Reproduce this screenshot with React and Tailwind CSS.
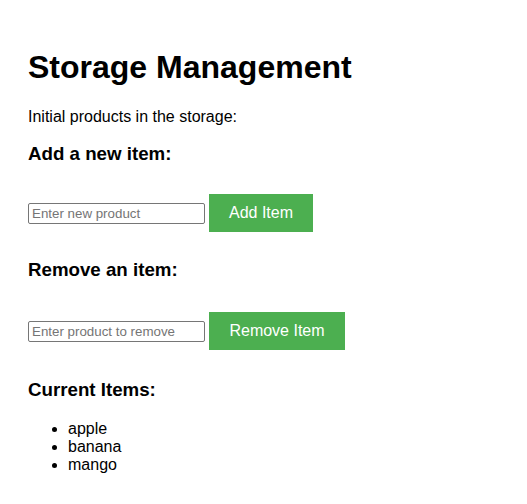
import { useState } from "react";

export default function App() {
  const [items, setItems] = useState(["apple", "banana", "mango"]);
  const [newItem, setNewItem] = useState("");
  const [removeItem, setRemoveItem] = useState("");

  const addItem = () => {
    if (!newItem.trim()) return;
    setItems([...items, newItem.trim()]);
    setNewItem("");
  };

  const deleteItem = () => {
    setItems(items.filter((i) => i !== removeItem.trim()));
    setRemoveItem("");
  };

  return (
    <div className="pt-[28px] pl-[28px] font-['Liberation_Sans',Arial,sans-serif] text-black bg-white min-h-screen">
      <h1 className="mt-[21px] text-[32px] leading-[37px] font-bold">
        Storage Management
      </h1>
      <p className="mt-[21.5px] text-[16px] leading-[18px]">
        Initial products in the storage:
      </p>

      <h3 className="mt-[17.5px] text-[18.72px] leading-[21.5px] font-bold">
        Add a new item:
      </h3>
      <div className="mt-[29.5px] flex items-center">
        <input
          type="text"
          placeholder="Enter new product"
          value={newItem}
          onChange={(e) => setNewItem(e.target.value)}
          className="w-[177px] h-[21px] border border-[#767676] rounded-[2px] px-[3px] text-[13.33px] placeholder:text-[#757575] outline-none"
        />
        <button
          onClick={addItem}
          className="ml-[4px] h-[38px] w-[104px] bg-[#4caf50] text-white text-[16px] leading-[18px]"
        >
          Add Item
        </button>
      </div>

      <h3 className="mt-[27px] text-[18.72px] leading-[21.5px] font-bold">
        Remove an item:
      </h3>
      <div className="mt-[31.5px] flex items-center">
        <input
          type="text"
          placeholder="Enter product to remove"
          value={removeItem}
          onChange={(e) => setRemoveItem(e.target.value)}
          className="w-[177px] h-[21px] border border-[#767676] rounded-[2px] px-[3px] text-[13.33px] placeholder:text-[#757575] outline-none"
        />
        <button
          onClick={deleteItem}
          className="ml-[4px] h-[38px] w-[136px] bg-[#4caf50] text-white text-[16px] leading-[18px]"
        >
          Remove Item
        </button>
      </div>

      <h3 className="mt-[29px] text-[18.72px] leading-[21.5px] font-bold">
        Current Items:
      </h3>
      <ul className="mt-[19px] pl-[40px] list-disc text-[16px] leading-[18px]">
        {items.map((item) => (
          <li key={item}>{item}</li>
        ))}
      </ul>
    </div>
  );
}
